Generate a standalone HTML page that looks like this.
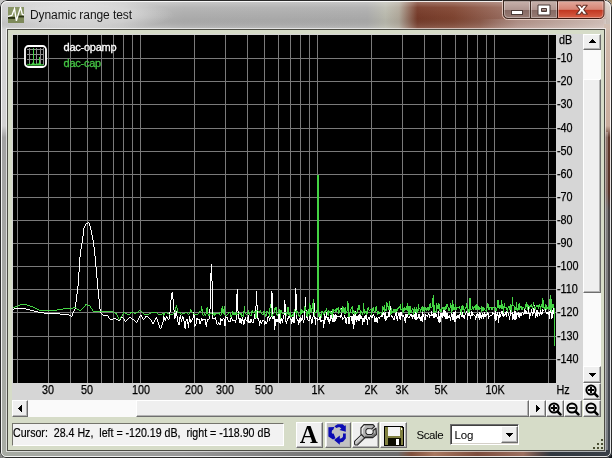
<!DOCTYPE html>
<html><head><meta charset="utf-8"><title>Dynamic range test</title>
<style>
*{box-sizing:border-box}
html,body{margin:0;padding:0}
body{width:612px;height:458px;overflow:hidden;background:#c4c4c4;font-family:"Liberation Sans",sans-serif;font-size:11px;color:#000;position:relative}
.abs,.win *{position:absolute}
.win{position:absolute;left:0;top:0;width:612px;height:458px;border-radius:7px 7px 6px 6px;overflow:hidden;
 background:#a8a8a8}
.glass{left:0;top:0;width:612px;height:458px}
.edge{left:0;top:0;width:612px;height:458px;border:1px solid #2a2a2a;border-radius:7px 7px 6px 6px}
.edge2{left:1px;top:1px;width:610px;height:456px;border:1px solid rgba(255,255,255,.85);border-radius:6px 6px 5px 5px}
.cl-hi{left:6px;top:28px;width:600px;height:424px;border:1px solid rgba(255,255,255,.6)}
.cl-dk{left:7px;top:29px;width:598px;height:422px;border:1px solid #4c4c44}
.client{will-change:transform;left:8px;top:30px;width:596px;height:420px;background:#d6dcc8}
.title{will-change:transform;left:30px;top:6px;height:18px;line-height:18px;font-size:12px;color:#161616;white-space:nowrap;letter-spacing:-0.08px}
.panel{left:4px;top:4px;width:571px;height:366px;background:#d6d6d6}
.plot{left:5px;top:5px}
.xl{-webkit-text-stroke:0.25px #000;top:352.6px;width:40px;text-align:center;height:14px;line-height:14px;white-space:nowrap;font-size:12px;transform:scaleX(.9)}
.yl{-webkit-text-stroke:0.25px #000;left:549px;height:14px;line-height:14px;white-space:nowrap;font-size:12px;transform:scaleX(.9);transform-origin:0 50%}
.leg{left:55.5px;white-space:nowrap;height:14px;line-height:14px;letter-spacing:-0.24px}
.btn{background:#efefef;border:1px solid;border-color:#fff #6e6e6e #6e6e6e #fff;box-shadow:inset -1px -1px 0 #b4b4b4}
.track{background:#fafafa}
.status{left:4px;top:393px;width:272px;height:23px;background:#f2f2f2;border:1px solid;border-color:#74746c #fff #fff #74746c}
.status span{-webkit-text-stroke:0.2px #000;left:0.4px;top:2.3px;height:14px;line-height:14px;white-space:pre;font-size:12px;transform:scaleX(.886);transform-origin:0 50%}
.tb{top:392px;height:26px;width:27px}
</style></head>
<body>
<div class="abs" style="left:600px;top:0;width:12px;height:12px;background:#a08868"></div><div class="abs" style="left:0;top:446px;width:12px;height:12px;background:#808080"></div><div class="abs" style="left:600px;top:446px;width:12px;height:12px;background:#101418"></div>
<div class="win">
<svg class="glass" width="612" height="458" viewBox="0 0 612 458">
<defs>
<linearGradient id="gt" x1="0" x2="612" y1="0" y2="0" gradientUnits="userSpaceOnUse">
<stop offset="0" stop-color="#cccccc"/><stop offset=".2" stop-color="#c4c4c4"/><stop offset=".30" stop-color="#b2b2b2"/>
<stop offset=".60" stop-color="#b0b0b0"/><stop offset=".63" stop-color="#bebeb2"/><stop offset=".652" stop-color="#b4ac9e"/>
<stop offset=".682" stop-color="#783c2a"/><stop offset=".74" stop-color="#824632"/><stop offset=".82" stop-color="#9a6c5e"/><stop offset=".9" stop-color="#b08c80"/><stop offset=".985" stop-color="#c8aea4"/><stop offset=".992" stop-color="#d8ccc4"/><stop offset="1" stop-color="#d8ccc4"/>
</linearGradient>
<linearGradient id="gtv" x1="0" x2="0" y1="0" y2="30" gradientUnits="userSpaceOnUse">
<stop offset="0" stop-color="#fff" stop-opacity=".35"/><stop offset=".25" stop-color="#fff" stop-opacity=".05"/><stop offset=".6" stop-color="#000" stop-opacity=".04"/><stop offset="1" stop-color="#fff" stop-opacity=".22"/>
</linearGradient>
<radialGradient id="glow"><stop offset="0" stop-color="#fff" stop-opacity=".45"/><stop offset=".6" stop-color="#fff" stop-opacity=".3"/><stop offset="1" stop-color="#fff" stop-opacity="0"/></radialGradient>
<linearGradient id="ub" x1="480" x2="606" y1="0" y2="0" gradientUnits="userSpaceOnUse"><stop offset="0" stop-color="#fff" stop-opacity="0"/><stop offset=".3" stop-color="#fff" stop-opacity=".2"/><stop offset="1" stop-color="#fff" stop-opacity=".25"/></linearGradient>
<linearGradient id="gl" x1="0" x2="0" y1="0" y2="458" gradientUnits="userSpaceOnUse">
<stop offset="0" stop-color="#d4d4d4"/><stop offset=".275" stop-color="#d2d2d2"/><stop offset=".30" stop-color="#a2a2a2"/><stop offset="1" stop-color="#a8aca4"/>
</linearGradient>
<linearGradient id="gr" x1="0" x2="0" y1="0" y2="458" gradientUnits="userSpaceOnUse">
<stop offset="0" stop-color="#d8ccc4"/><stop offset=".08" stop-color="#d0baac"/><stop offset=".275" stop-color="#caae9e"/><stop offset=".30" stop-color="#5e382c"/><stop offset=".42" stop-color="#58342a"/>
<stop offset=".46" stop-color="#484444"/><stop offset=".8" stop-color="#464a50"/><stop offset="1" stop-color="#40464e"/>
</linearGradient>
<linearGradient id="gb" x1="0" x2="612" y1="0" y2="0" gradientUnits="userSpaceOnUse">
<stop offset="0" stop-color="#a8aca4"/><stop offset=".3" stop-color="#989898"/><stop offset=".5" stop-color="#787878"/><stop offset=".65" stop-color="#6c6c6c"/>
<stop offset=".672" stop-color="#80503c"/><stop offset=".71" stop-color="#a87860"/><stop offset=".78" stop-color="#7c4c3c"/><stop offset=".855" stop-color="#9c7060"/>
<stop offset=".885" stop-color="#504444"/><stop offset=".9" stop-color="#303840"/><stop offset="1" stop-color="#383e46"/>
</linearGradient>
</defs>
<rect x="0" y="0" width="612" height="30" fill="url(#gt)"/>
<rect x="0" y="0" width="612" height="30" fill="url(#gtv)"/>
<rect x="480" y="19" width="126" height="10" fill="url(#ub)"/>
<rect x="0" y="30" width="8" height="428" fill="url(#gl)"/>
<rect x="604" y="24" width="8" height="434" fill="url(#gr)"/>
<rect x="606" y="132" width="2" height="320" fill="#fff" opacity=".3"/>
<rect x="0" y="450" width="612" height="8" fill="url(#gb)"/>
<ellipse cx="80" cy="15" rx="95" ry="16" fill="url(#glow)"/>
</svg>
<div class="edge"></div><div class="edge2"></div>
<svg style="left:8px;top:7px" width="16" height="16" viewBox="0 0 16 16">
<rect width="16" height="16" fill="#8a9666"/><rect y="11" width="16" height="5" fill="#7e8a5a"/>
<rect x="0" y="9.900" width="7.300" height="2" fill="#2a3212"/><rect x="9.700" y="8.600" width="6.300" height="1.900" fill="#2a3212"/>
<path d="M0 9.300L3.900 8.400L6.500 1.600L8.400 13.800L12.500 0.400L14.300 7.500L16 7.800" fill="none" stroke="#fff" stroke-width="1.300" stroke-linejoin="miter"/>
</svg>
<div class="title">Dynamic range test</div>
<svg style="left:500px;top:0" width="108" height="22" viewBox="0 0 108 22">
<defs>
<linearGradient id="cb" x1="0" x2="0" y1="0" y2="1"><stop offset="0" stop-color="#c8b2ac"/><stop offset=".5" stop-color="#b09690"/><stop offset=".52" stop-color="#866a64"/><stop offset="1" stop-color="#987c74"/></linearGradient>
<linearGradient id="cr" x1="0" x2="0" y1="0" y2="1"><stop offset="0" stop-color="#e2aa9e"/><stop offset=".48" stop-color="#d68474"/><stop offset=".52" stop-color="#c23620"/><stop offset="1" stop-color="#d8644a"/></linearGradient>
</defs>
<path d="M2.5 0V14.5a5 5 0 0 0 5 5H99.5a5 5 0 0 0 5-5V0" fill="none" stroke="#f0d8d0" stroke-opacity=".8" stroke-width="1"/>
<path d="M3.5 1V14a4.5 4.5 0 0 0 4.500 4.500H30.5V1z" fill="url(#cb)" stroke="#3c2820" stroke-width="1"/>
<path d="M30.500 1V18.500H57.500V1z" fill="url(#cb)" stroke="#3c2820" stroke-width="1"/>
<path d="M57.500 1V18.500H99.500a4.500 4.500 0 0 0 4.500 -4.500V1z" fill="url(#cr)" stroke="#3c1810" stroke-width="1"/>
<path d="M4.500 1.500V14a3.500 3.500 0 0 0 3.500 3.500H29.500V1.500zM31.500 1.500V17.500H56.500V1.500zM58.500 1.500V17.500H99.500a3.500 3.500 0 0 0 3.500 -3.500V1.500z" fill="none" stroke="#fff" stroke-opacity=".35"/>
<rect x="11.500" y="10.500" width="11" height="4" fill="#fff" stroke="#4a3a36" stroke-width="1"/>
<path d="M38 5h12v10h-12zM41.500 8.500h5v3h-5z" fill="#fff" fill-rule="evenodd" stroke="#4a3a36" stroke-width="1"/>
<path d="M76.300 5.200h3.900l1.600 2.300 1.600-2.300h3.900l-3.500 4.500 3.500 4.500h-3.900l-1.600-2.300-1.600 2.300h-3.900l3.500-4.500z" fill="#fff" stroke="#6a3228" stroke-width="1.100" stroke-linejoin="round"/>
</svg>
<div class="cl-hi"></div><div class="cl-dk"></div>
<div class="client">
 <div class="panel"></div>
 <svg class="plot" width="543" height="348" viewBox="0 0 543 348" shape-rendering="crispEdges">
<rect width="543" height="348" fill="#000"/>
<path d="M4.5 0V348M35.5 0V348M57.5 0V348M74.5 0V348M88.5 0V348M100.5 0V348M110.5 0V348M119.5 0V348M127.5 0V348M181.5 0V348M212.5 0V348M234.5 0V348M251.5 0V348M265.5 0V348M277.5 0V348M287.5 0V348M296.5 0V348M304.5 0V348M358.5 0V348M389.5 0V348M411.5 0V348M428.5 0V348M442.5 0V348M454.5 0V348M464.5 0V348M473.5 0V348M481.5 0V348M535.5 0V348M0 23.5H543M0 46.5H543M0 69.5H543M0 93.5H543M0 116.5H543M0 139.5H543M0 162.5H543M0 185.5H543M0 208.5H543M0 231.5H543M0 254.5H543M0 277.5H543M0 301.5H543M0 324.5H543" stroke="#7a7a7a" stroke-width="1" fill="none"/>
<g transform="translate(0.5,0)"><path d="M0 274v1M1 273v1M2 273v1M3 273v1M4 273v1M5 273v1M6 273v1M7 273v1M8 273v1M9 273v1M10 273v1M11 273v1M12 273v1M13 274v1M14 274v1M15 274v1M16 274v1M17 275v1M18 275v1M19 275v1M20 275v1M21 276v1M22 276v1M23 276v1M24 276v1M25 277v1M26 277v1M27 277v1M28 277v1M29 277v1M30 277v1M31 278v1M32 278v1M33 278v1M34 278v1M35 278v1M36 278v1M37 278v1M38 278v1M39 278v1M40 278v1M41 278v1M42 278v1M43 278v1M44 278v1M45 278v1M46 278v1M47 279v1M48 279v1M49 279v1M50 279v1M51 279v1M52 279v1M53 279v1M54 279v1M55 279v1M56 280v1M57 280v1M58 281v1M59 278v3M60 276v2M61 274v2M62 267v7M63 259v8M64 251v8M65 237v14M66 222v15M67 214v8M68 208v6M69 201v7M70 193v8M71 191v2M72 189v2M73 188v1M74 188v1M75 187v1M76 188v3M77 191v4M78 195v5M79 200v5M80 205v7M81 212v9M82 221v11M83 232v11M84 243v11M85 254v10M86 264v10M87 274v4M88 278v1M89 279v1M90 280v1M91 280v1M92 280v1M93 280v1M94 280v1M95 281v2M96 283v1M97 284v1M98 284v1M99 284v1M100 283v1M101 283v1M102 283v1M103 284v1M104 284v1M105 285v1M106 285v1M107 283v2M108 282v1M109 282v1M110 283v1M111 284v2M112 286v1M113 285v1M114 284v1M115 283v1M116 282v1M117 282v1M118 283v1M119 284v1M120 284v1M121 285v1M122 286v1M123 287v1M124 285v2M125 283v2M126 281v2M127 280v1M128 280v2M129 282v2M130 284v1M131 283v1M132 281v2M133 281v1M134 281v1M135 282v1M136 283v1M137 284v1M138 285v2M139 287v2M140 287v2M141 285v2M142 283v2M143 282v2M144 284v3M145 287v3M146 290v3M147 293v1M148 290v3M149 287v3M150 281v6M151 282v3M152 283v3M153 281v2M154 282v2M155 284v1M156 277v7M157 265v12M158 258v7M159 257v7M160 264v11M161 275v9M162 278v5M163 276v5M164 281v6M165 287v3M166 282v8M167 280v4M168 284v3M169 281v3M170 282v4M171 286v7M172 286v8M173 284v2M174 284v5M175 287v6M176 281v6M177 284v4M178 285v2M179 283v2M180 277v6M181 280v12M182 289v2M183 283v6M184 283v2M185 284v1M186 284v5M187 286v3M188 283v3M189 284v2M190 284v1M191 284v1M192 284v6M193 287v5M194 284v3M195 284v1M196 274v10M197 238v36M198 229v17M199 246v38M200 283v1M201 283v1M202 282v3M203 285v4M204 289v1M205 287v2M206 288v2M207 283v7M208 284v2M209 284v2M210 283v1M211 284v7M212 280v11M213 282v1M214 282v3M215 285v2M216 286v1M217 283v4M218 282v2M219 284v2M220 285v1M221 285v1M222 285v3M223 259v26M224 254v22M225 276v8M226 283v5M227 283v5M228 284v5M229 282v4M230 285v5M231 284v5M232 282v3M233 285v1M234 282v5M235 280v8M236 286v2M237 284v4M238 284v3M239 287v1M240 284v4M241 279v5M242 271v13M243 256v15M244 270v14M245 283v3M246 286v5M247 285v3M248 287v2M249 285v2M250 285v1M251 286v4M252 286v3M253 287v2M254 282v5M255 281v2M256 283v3M257 282v2M258 256v26M259 258v26M260 281v3M261 281v14M262 284v7M263 284v3M264 284v3M265 279v8M266 279v9M267 284v5M268 283v3M269 284v4M270 280v4M271 265v15M272 269v18M273 286v3M274 283v3M275 281v3M276 280v3M277 283v2M278 284v5M279 282v5M280 280v8M281 277v11M282 253v24M283 259v25M284 284v2M285 285v5M286 283v5M287 282v5M288 283v3M289 280v5M290 285v3M291 271v14M292 262v13M293 275v8M294 282v3M295 285v1M296 279v7M297 280v4M298 284v5M299 282v6M300 267v15M301 268v16M302 282v8M303 283v1M304 283v3M305 284v1M306 281v4M307 280v7M308 285v2M309 285v1M310 285v8M311 279v10M312 281v4M313 277v6M314 282v3M315 282v5M316 284v5M317 280v6M318 276v8M319 281v6M320 279v8M321 280v7M322 279v7M323 280v4M324 281v1M325 281v1M326 281v1M327 280v3M328 273v9M329 282v3M330 283v1M331 280v3M332 282v6M333 283v6M334 282v1M335 282v7M336 282v7M337 281v1M338 281v5M339 281v8M340 279v15M341 280v10M342 276v9M343 281v6M344 281v4M345 280v6M346 279v7M347 279v5M348 281v3M349 283v7M350 283v4M351 281v6M352 280v4M353 280v5M354 284v6M355 282v2M356 282v3M357 280v2M358 281v2M359 280v3M360 279v2M361 281v6M362 283v4M363 282v5M364 283v5M365 282v1M366 282v2M367 281v1M368 280v2M369 278v4M370 277v3M371 278v6M372 277v9M373 281v4M374 281v2M375 277v5M376 275v7M377 271v9M378 280v2M379 281v2M380 283v2M381 281v4M382 278v3M383 277v7M384 281v5M385 278v3M386 278v6M387 277v8M388 277v4M389 280v2M390 280v2M391 282v4M392 279v9M393 279v4M394 279v3M395 282v1M396 281v2M397 279v2M398 279v3M399 280v4M400 280v2M401 279v5M402 276v9M403 276v9M404 282v2M405 279v4M406 279v5M407 282v4M408 281v5M409 274v13M410 279v3M411 282v3M412 279v6M413 280v1M414 280v2M415 278v2M416 279v4M417 280v1M418 276v5M419 279v2M420 278v5M421 278v5M422 278v4M423 279v3M424 282v2M425 276v11M426 281v7M427 278v9M428 278v4M429 278v5M430 275v6M431 272v10M432 276v8M433 278v6M434 278v6M435 281v2M436 280v3M437 282v4M438 277v5M439 279v6M440 277v8M441 277v10M442 276v11M443 281v3M444 280v3M445 280v3M446 279v5M447 277v3M448 279v3M449 277v5M450 280v3M451 280v4M452 278v2M453 276v2M454 278v7M455 277v4M456 277v4M457 280v4M458 276v5M459 277v4M460 279v1M461 280v1M462 281v4M463 279v4M464 278v3M465 279v4M466 277v8M467 278v5M468 280v4M469 278v4M470 279v5M471 277v5M472 279v3M473 279v2M474 277v3M475 278v6M476 281v1M477 280v1M478 280v1M479 277v3M480 278v1M481 278v6M482 276v10M483 279v6M484 277v4M485 280v8M486 277v6M487 279v3M488 276v3M489 276v5M490 278v4M491 279v2M492 277v3M493 276v6M494 275v3M495 278v3M496 281v4M497 275v6M498 278v1M499 277v8M500 279v5M501 275v10M502 276v9M503 278v6M504 278v2M505 277v5M506 278v5M507 278v3M508 278v3M509 277v1M510 278v2M511 274v5M512 275v4M513 276v3M514 278v1M515 272v7M516 278v6M517 278v3M518 274v4M519 277v4M520 273v6M521 270v8M522 278v5M523 275v6M524 275v7M525 277v2M526 278v3M527 274v5M528 277v3M529 274v5M530 275v1M531 274v1M532 273v4M533 277v2M534 277v2M535 277v3M536 276v8M537 269v9M538 271v13M539 275v8M540 273v6" stroke="#fff" stroke-width="1" fill="none"/>
<path d="M0 272v1M1 272v1M2 271v1M3 271v1M4 271v1M5 270v1M6 270v1M7 269v1M8 269v1M9 269v1M10 269v1M11 269v1M12 269v1M13 269v1M14 270v1M15 270v1M16 270v1M17 271v1M18 271v1M19 271v1M20 272v1M21 272v1M22 273v1M23 273v1M24 274v1M25 274v1M26 275v1M27 275v1M28 275v1M29 275v1M30 275v1M31 275v1M32 275v1M33 275v1M34 275v1M35 275v1M36 275v1M37 275v1M38 275v1M39 275v1M40 275v1M41 275v1M42 275v1M43 275v1M44 274v1M45 274v1M46 274v1M47 274v1M48 274v1M49 274v1M50 273v1M51 273v1M52 273v1M53 273v1M54 273v1M55 273v1M56 273v1M57 273v1M58 273v1M59 273v1M60 272v1M61 272v1M62 272v1M63 273v1M64 274v1M65 274v1M66 275v1M67 275v1M68 274v1M69 273v1M70 272v1M71 271v1M72 269v2M73 269v1M74 270v1M75 270v1M76 270v1M77 271v2M78 273v1M79 274v2M80 276v1M81 276v1M82 276v1M83 276v1M84 276v1M85 276v1M86 276v1M87 276v1M88 276v1M89 276v1M90 276v1M91 276v1M92 276v1M93 276v1M94 276v1M95 276v1M96 276v1M97 276v1M98 276v1M99 276v1M100 277v1M101 277v1M102 278v1M103 278v2M104 280v2M105 282v2M106 284v1M107 282v2M108 281v1M109 279v2M110 277v2M111 277v1M112 278v1M113 278v1M114 279v1M115 279v1M116 279v1M117 277v2M118 277v1M119 277v1M120 277v1M121 278v1M122 278v1M123 277v1M124 277v1M125 276v1M126 275v1M127 275v1M128 276v1M129 277v1M130 278v1M131 279v1M132 279v1M133 279v1M134 279v1M135 279v1M136 278v1M137 278v1M138 277v1M139 277v1M140 277v1M141 277v1M142 277v1M143 277v1M144 278v1M145 279v1M146 279v1M147 279v1M148 279v1M149 278v1M150 278v3M151 278v2M152 277v1M153 277v1M154 278v1M155 278v1M156 279v1M157 279v1M158 279v1M159 279v1M160 278v1M161 277v1M162 272v5M163 270v3M164 273v4M165 277v1M166 277v1M167 277v2M168 279v1M169 278v1M170 278v1M171 278v1M172 277v1M173 277v1M174 278v1M175 279v1M176 277v2M177 274v3M178 275v2M179 277v1M180 278v1M181 279v1M182 279v1M183 279v1M184 279v1M185 278v1M186 276v2M187 276v1M188 271v5M189 274v6M190 280v1M191 278v2M192 279v2M193 273v6M194 272v7M195 279v2M196 278v3M197 278v1M198 278v1M199 279v1M200 277v3M201 278v3M202 278v2M203 278v1M204 278v1M205 278v1M206 277v3M207 280v1M208 273v7M209 271v7M210 274v5M211 271v9M212 280v1M213 280v1M214 279v1M215 277v2M216 277v1M217 278v4M218 280v2M219 276v4M220 277v3M221 278v2M222 277v3M223 277v3M224 279v1M225 278v1M226 277v2M227 278v2M228 278v4M229 280v1M230 276v6M231 271v7M232 278v1M233 279v1M234 277v2M235 275v4M236 278v2M237 280v1M238 276v5M239 275v3M240 277v1M241 276v1M242 276v7M243 275v8M244 275v1M245 276v1M246 276v2M247 275v2M248 277v2M249 279v1M250 276v4M251 276v3M252 279v3M253 276v5M254 276v1M255 277v2M256 273v9M257 269v4M258 273v8M259 279v3M260 278v1M261 273v5M262 272v3M263 272v8M264 279v2M265 275v4M266 274v5M267 275v9M268 275v3M269 278v1M270 278v1M271 277v1M272 277v1M273 278v3M274 272v7M275 272v8M276 278v3M277 277v5M278 280v2M279 279v2M280 277v5M281 274v3M282 276v2M283 275v5M284 276v2M285 278v3M286 280v2M287 275v5M288 274v5M289 275v3M290 276v2M291 271v5M292 272v4M293 276v5M294 276v6M295 274v5M296 268v13M297 270v7M298 273v5M299 268v6M300 264v13M301 277v4M302 277v1M303 275v3M304 275v2M305 276v6M306 278v4M307 279v2M308 276v7M309 276v2M310 278v2M311 276v3M312 275v3M313 273v3M314 276v4M315 275v6M316 276v2M317 276v3M318 277v3M319 274v9M320 274v4M321 275v1M322 274v3M323 273v4M324 273v2M325 272v7M326 275v3M327 273v2M328 274v4M329 271v6M330 272v5M331 273v6M332 272v7M333 276v2M334 266v10M335 268v14M336 278v4M337 274v4M338 272v2M339 271v8M340 275v3M341 276v4M342 277v2M343 277v2M344 273v5M345 270v5M346 270v5M347 275v5M348 276v2M349 278v2M350 268v10M351 274v5M352 276v2M353 276v4M354 273v6M355 272v3M356 275v1M357 274v1M358 274v6M359 273v4M360 272v4M361 276v2M362 272v5M363 271v5M364 276v4M365 276v3M366 277v2M367 277v1M368 278v2M369 271v7M370 272v3M371 270v7M372 274v2M373 267v9M374 268v4M375 271v4M376 266v9M377 275v5M378 273v6M379 276v2M380 274v4M381 274v3M382 274v4M383 274v3M384 273v3M385 272v2M386 271v2M387 269v6M388 274v1M389 268v9M390 273v5M391 272v4M392 273v2M393 271v4M394 268v8M395 271v9M396 271v9M397 271v7M398 275v3M399 273v2M400 274v6M401 272v6M402 274v3M403 272v6M404 274v4M405 269v7M406 273v1M407 274v3M408 272v3M409 271v6M410 272v4M411 272v5M412 272v3M413 273v3M414 272v3M415 272v4M416 269v6M417 268v5M418 272v1M419 263v9M420 260v18M421 270v7M422 276v2M423 268v9M424 270v4M425 268v6M426 269v7M427 274v3M428 273v4M429 272v2M430 272v3M431 272v3M432 271v4M433 269v5M434 269v3M435 272v4M436 273v3M437 268v5M438 270v8M439 265v11M440 269v6M441 272v3M442 269v6M443 272v3M444 272v1M445 272v1M446 271v3M447 274v3M448 271v9M449 270v5M450 271v4M451 274v4M452 272v2M453 268v5M454 270v6M455 274v4M456 263v14M457 263v12M458 274v1M459 271v3M460 272v3M461 271v2M462 270v5M463 269v6M464 270v4M465 271v4M466 272v3M467 273v1M468 271v6M469 272v4M470 272v4M471 273v2M472 275v1M473 272v5M474 268v5M475 269v6M476 272v3M477 272v1M478 272v3M479 272v3M480 272v1M481 272v1M482 272v4M483 273v3M484 265v8M485 265v8M486 270v4M487 270v3M488 265v9M489 269v5M490 271v7M491 268v5M492 272v1M493 272v3M494 273v4M495 271v2M496 271v4M497 269v6M498 270v7M499 262v9M500 270v1M501 271v5M502 272v3M503 267v8M504 273v3M505 269v6M506 268v7M507 271v2M508 271v4M509 272v3M510 272v1M511 273v1M512 269v5M513 267v5M514 269v6M515 270v2M516 271v3M517 270v2M518 269v3M519 271v3M520 267v4M521 271v3M522 272v3M523 270v2M524 270v2M525 270v4M526 269v3M527 271v4M528 269v3M529 263v10M530 265v8M531 272v3M532 269v5M533 270v5M534 272v2M535 271v3M536 264v11M537 260v15M538 264v13M539 269v4M540 269v4M541 273v38" stroke="#44d444" stroke-width="1" fill="none"/></g>
<rect x="304" y="140" width="2" height="137" fill="#44d444"/>
</svg>
 <svg style="left:16px;top:15px" width="23" height="23" viewBox="0 0 23 23">
<rect x="1" y="1" width="21" height="21" rx="3.500" fill="#000" stroke="#fff" stroke-width="1.800"/>
<g shape-rendering="crispEdges"><path d="M5.500 3v17M12.500 3v17M16.500 3v17M19.500 3v17M3 4.500h17M3 9.500h17M3 14.500h17" stroke="#8c8c8c" stroke-width="1" fill="none"/>
<path d="M9.500 3v17" stroke="#48d048" stroke-width="1"/><path d="M15.500 12v8" stroke="#48d048" stroke-width="1"/></g>
<path d="M3 20.500L3.500 18.500L4.500 19.500L5.500 18L6.500 19.500L8 18.500L9 17L10.500 18.500L11.500 19L13 18L14 19L15 17.500L16.500 18.500L17.500 19.500L19 19L20 20.500z" fill="#48d048"/>
</svg>
 <span class="leg" style="top:10.4px;color:#fff;-webkit-text-stroke:0.3px #fff">dac-opamp</span>
 <span class="leg" style="top:26.3px;color:#44c444;-webkit-text-stroke:0.3px #44c444">dac-cap</span>
 <span class="xl" style="left:20.2px">30</span><span class="xl" style="left:59.4px">50</span><span class="xl" style="left:112.7px">100</span><span class="xl" style="left:166.0px">200</span><span class="xl" style="left:197.2px">300</span><span class="xl" style="left:236.4px">500</span><span class="xl" style="left:289.7px">1K</span><span class="xl" style="left:343.0px">2K</span><span class="xl" style="left:374.2px">3K</span><span class="xl" style="left:413.4px">5K</span><span class="xl" style="left:466.7px">10K</span>
 <span class="xl" style="left:542px;width:26px;letter-spacing:0">Hz</span>
 <span class="yl" style="top:3.2px;left:551px;letter-spacing:0">dB</span>
 <span class="yl" style="top:20.5px">-10</span><span class="yl" style="top:43.5px">-20</span><span class="yl" style="top:66.5px">-30</span><span class="yl" style="top:90.5px">-40</span><span class="yl" style="top:113.5px">-50</span><span class="yl" style="top:136.5px">-60</span><span class="yl" style="top:159.5px">-70</span><span class="yl" style="top:182.5px">-80</span><span class="yl" style="top:205.5px">-90</span><span class="yl" style="top:228.5px">-100</span><span class="yl" style="top:251.5px">-110</span><span class="yl" style="top:274.5px">-120</span><span class="yl" style="top:298.5px">-130</span><span class="yl" style="top:321.5px">-140</span>
 <!-- vertical scrollbar -->
 <div class="track" style="left:575px;top:4px;width:18px;height:349px"></div>
 <div class="btn" style="left:575px;top:4px;width:18px;height:16px"><svg style="left:5px;top:4px" width="7" height="4" shape-rendering="crispEdges"><path d="M3 0h1v1h1v1h1v1h1v1h-7v-1h1v-1h1v-1h1z" fill="#000"/></svg></div>
 <div class="btn" style="left:575px;top:49px;width:18px;height:214px"></div>
 <div class="btn" style="left:575px;top:336px;width:18px;height:17px"><svg style="left:5px;top:6px" width="7" height="4" shape-rendering="crispEdges"><path d="M0 0h7v1h-1v1h-1v1h-1v1h-1v-1h-1v-1h-1v-1h-1z" fill="#000"/></svg></div>
 <div class="btn" style="left:575px;top:353px;width:18px;height:17px"><svg style="left:0.5px;top:-0.5px" width="14" height="14" viewBox="0 0 14 14"><circle cx="6" cy="6" r="4.6" fill="none" stroke="#000" stroke-width="2"/><path d="M3 6h6M6 3v6" stroke="#000" stroke-width="1.9" fill="none"/><path d="M9.6 9.6L12.4 12.4" stroke="#000" stroke-width="2.6" stroke-linecap="round"/></svg></div>
 <!-- horizontal scrollbar -->
 <div class="track" style="left:4px;top:370px;width:534px;height:17px"></div>
 <div class="btn" style="left:4px;top:370px;width:16px;height:17px"><svg style="left:5px;top:4px" width="4" height="7" shape-rendering="crispEdges"><path d="M3 0h1v7h-1v-1h-1v-1h-1v-1h-1v-1h1v-1h1v-1h1z" fill="#000"/></svg></div>
 <div class="btn" style="left:128px;top:370px;width:393px;height:17px"></div>
 <div class="btn" style="left:521px;top:370px;width:17px;height:17px"><svg style="left:6px;top:4px" width="4" height="7" shape-rendering="crispEdges"><path d="M0 0h1v1h1v1h1v1h1v1h-1v1h-1v1h-1v1h-1z" fill="#000"/></svg></div>
 <div class="btn" style="left:538px;top:370px;width:18px;height:17px"><svg style="left:0.5px;top:1px" width="14" height="14" viewBox="0 0 14 14"><circle cx="6" cy="6" r="4.6" fill="none" stroke="#000" stroke-width="2"/><path d="M3 6h6M6 3v6" stroke="#000" stroke-width="1.9" fill="none"/><path d="M9.6 9.6L12.4 12.4" stroke="#000" stroke-width="2.6" stroke-linecap="round"/></svg></div>
 <div class="btn" style="left:556px;top:370px;width:18px;height:17px"><svg style="left:0.5px;top:1px" width="14" height="14" viewBox="0 0 14 14"><circle cx="6" cy="6" r="4.6" fill="none" stroke="#000" stroke-width="2"/><path d="M3 6h6" stroke="#000" stroke-width="1.9" fill="none"/><path d="M9.6 9.6L12.4 12.4" stroke="#000" stroke-width="2.6" stroke-linecap="round"/></svg></div>
 <div class="btn" style="left:575px;top:370px;width:18px;height:17px"><svg style="left:0.5px;top:1px" width="14" height="14" viewBox="0 0 14 14"><circle cx="6" cy="6" r="4.6" fill="none" stroke="#000" stroke-width="2"/><path d="M3 6h6" stroke="#000" stroke-width="1.9" fill="none"/><path d="M9.6 9.6L12.4 12.4" stroke="#000" stroke-width="2.6" stroke-linecap="round"/></svg></div>
 <!-- status -->
 <div class="status"><span>Cursor:  28.4 Hz,  left = -120.19 dB,  right = -118.90 dB</span></div>
 <!-- toolbar -->
 <div class="btn tb" style="left:288px"><span style="left:2.8px;top:-2.4px;font:bold 25px/28px 'Liberation Serif',serif;color:#000">A</span></div>
 <div class="btn tb" style="left:317px;width:26px"><svg style="left:1px;top:0px" width="22" height="23" viewBox="0 0 22 23">
<rect width="22" height="23" fill="#c2c2c2"/>
<path d="M7.4 3.3L10.6 1.3L15.7 1.3L17.6 3.0L18.8 2.2L18.8 8.7L12.5 7.1L14.4 5.5L12.2 4.1L9.3 4.9zM16.0 10.6L18.8 10.6L18.8 15.4L16.0 18.8L12.8 19.5L12.8 21.7L7.1 16.9L12.8 12.5L12.8 15.7L15.0 15.0L16.0 13.5zM1.4 4.3L7.3 4.1L6.4 6.5L5.0 7.4L4.7 9.7L5.6 10.8L6.6 10.6L8.5 15.2L6.0 16.4L1.4 13.6z" fill="#0c0cb4"/></svg></div>
 <div class="btn tb" style="left:344px"><svg style="left:1px;top:1px" width="24" height="23" viewBox="0 0 24 23">
<path d="M8.2 10.2L11.3 13.3L3.2 21L1.2 21L0.500 20L0.500 17.500z" fill="#c4c4c4" stroke="#2a2a2a" stroke-width="1.100" stroke-linejoin="round"/>
<path d="M10.800 13.800L3.200 21" stroke="#505050" stroke-width="1.300" fill="none"/>
<path d="M1.500 17.800L8 11.500" stroke="#f0f0f0" stroke-width="1" fill="none"/>
<path d="M10 0.600L19 0.600L20.600 2.400L17.800 5L13.500 4.600L12 6.200L12 9L13.500 10.500L17.500 10.500L19 9L19 6.500L22 4.200L22.400 10.500L18.800 13.600L10.500 13.600L7 10.200L7 4z" fill="#b4b4b4" stroke="#262626" stroke-width="1.200" stroke-linejoin="round"/>
<path d="M8.300 9.800L8.300 4.600L10.600 2" stroke="#ececec" stroke-width="1.200" fill="none"/>
<path d="M11 12.300L18.300 12.300L21.200 9.800" stroke="#6a6a6a" stroke-width="1.200" fill="none"/>
<path d="M12.600 6.400L12.600 8.800L13.800 9.900L17.200 9.900L18.400 8.800L18.400 6.800L16.500 5.200L13.800 5.200z" fill="#eeeeee"/>
</svg></div>
 <div class="btn tb" style="left:372px"><svg style="left:3px;top:3px" width="20" height="20" viewBox="0 0 20 20" shape-rendering="crispEdges">
<path d="M0 0h18l2 2v18h-20z" fill="#808040" stroke="none"/>
<path d="M.500 .500h17.500l1.500 1.500v17.500h-19z" fill="none" stroke="#000"/>
<rect x="4" y="1" width="12" height="9" fill="#f4f4f4"/>
<rect x="4" y="12" width="13" height="8" fill="#0c0c00"/>
<rect x="12" y="13" width="3" height="6" fill="#fff"/>
<rect x="17" y="2" width="1" height="2" fill="#fff"/>
</svg></div>
 <span style="left:408.500px;top:398px;height:14px;line-height:14px;letter-spacing:-0.4px;font-size:11.500px">Scale</span>
 <div style="left:442px;top:394px;width:69px;height:21px;background:#fff;border:1px solid;border-color:#6e6e6e #fff #fff #6e6e6e;box-shadow:inset 1px 1px 0 #404040,inset -1px -1px 0 #d4d0c8">
   <span style="left:3.500px;top:3px;height:14px;line-height:14px;letter-spacing:-0.2px;font-size:11.500px">Log</span>
   <div class="btn" style="left:50px;top:1px;width:17px;height:17px"><svg style="left:4px;top:6px" width="7" height="4" shape-rendering="crispEdges"><path d="M0 0h7v1h-1v1h-1v1h-1v1h-1v-1h-1v-1h-1v-1h-1z" fill="#000"/></svg></div>
 </div>
 <svg style="left:585px;top:409px" width="11" height="11" shape-rendering="crispEdges"><path d="M8 0h2v2h-2zM4 4h2v2h-2zM8 4h2v2h-2zM0 8h2v2h-2zM4 8h2v2h-2zM8 8h2v2h-2z" fill="#4c5034"/></svg>
</div>
</div>
</body></html>
